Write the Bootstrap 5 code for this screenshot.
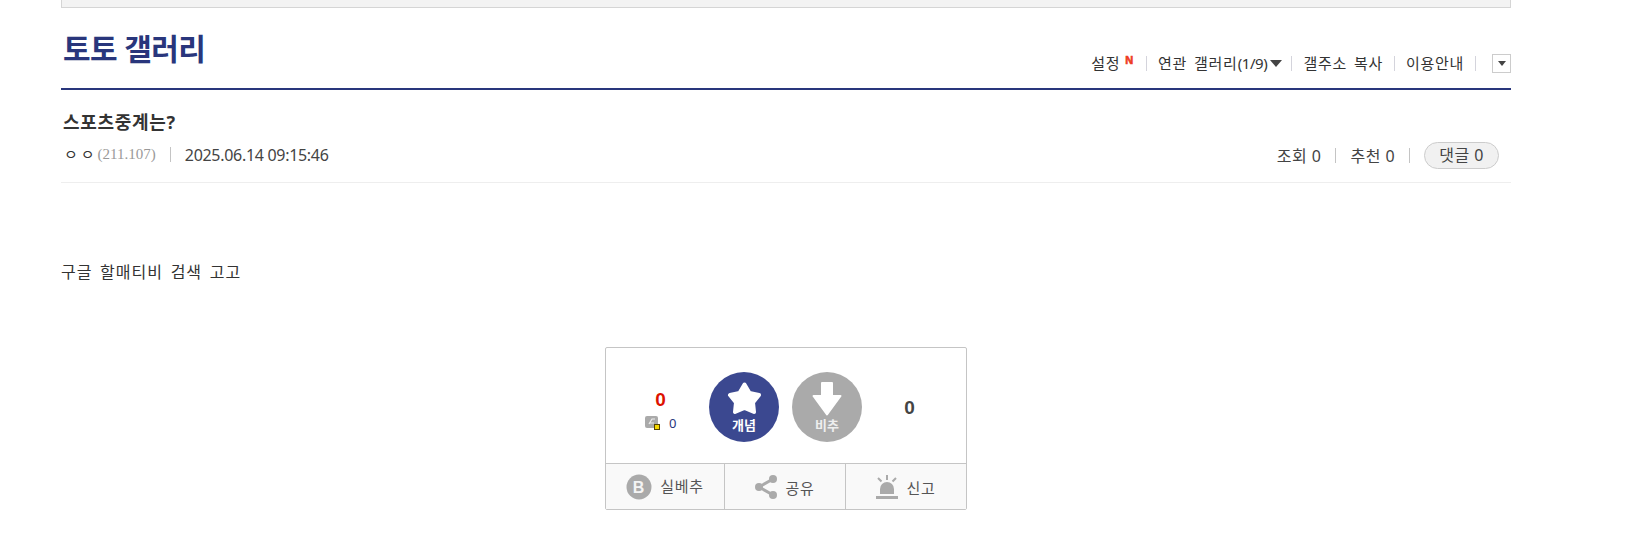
<!DOCTYPE html>
<html lang="ko">

    <head>
        <meta charset="UTF-8">
        <title>토토 갤러리</title>
        <meta name="viewport" content="width=device-width, initial-scale=1.0">
        <link href="https://cdn.jsdelivr.net/npm/bootstrap@5.3.0/dist/css/bootstrap.min.css" rel="stylesheet">
        <style>
            body {
                font-family: "Noto Sans", "Noto Sans CJK KR", sans-serif;
                color: #333;
                font-size: 15px;
                letter-spacing: .7px;
                word-spacing: 2.5px;
                overflow: hidden;
            }

            .gall-wrap { width: 1450px; margin-left: 61px; }
            .top-box { height: 8px; background: #f3f3f3; border: 1px solid #d5d5d5; border-top: 0; }

            .head-row { height: 82px; border-bottom: 2px solid #29367c; }
            .gall-title { font-size: 30px; font-weight: 700; color: #29367c; letter-spacing: -.6px; word-spacing: 0; line-height: 40px; margin: 0 0 0 2px; padding-top: 21px; }
            .head-links { padding-bottom: 15px; line-height: 20px; }
            .sep { width: 1px; height: 15px; background: #d4d4dc; margin: 0 11px; }
            .sep-left { margin-left: 9px; }
            .sep-last { margin-right: 16px; }
            .sep-meta { margin: 0 14px; background: #c4c4c4; }
            .new-mark { color: #ee3b24; font-family: "Liberation Sans", sans-serif; font-size: 11px; font-weight: 700; -webkit-text-stroke: .6px #ee3b24; line-height: 10px; margin: 0 1px 6px 5px; }
            .page-num { letter-spacing: -.4px; }
            .tri { width: 0; height: 0; border-left: 6px solid transparent; border-right: 6px solid transparent; border-top: 7px solid #444; margin-left: 3px; }
            .fold-btn { width: 19px; height: 19px; border: 1px solid #ccc; }
            .fold-btn span { width: 0; height: 0; border-left: 4px solid transparent; border-right: 4px solid transparent; border-top: 5px solid #444; }

            .post-head { height: 93px; border-bottom: 1px solid #eee; padding: 20px 0 0 2px; }
            .post-title { font-size: 18px; font-weight: 700; line-height: 24px; margin: 0; letter-spacing: .7px; }
            .post-meta { margin-top: 8px; }
            .meta-left { margin-bottom: 2px; }
            .writer { letter-spacing: 3px; margin-left: 1px; }
            .writer-ip { font-family: "Liberation Serif", serif; color: #999; letter-spacing: 0; word-spacing: 0; }
            .post-date { font-size: 16px; color: #444; letter-spacing: -.3px; word-spacing: 0; }
            .meta-right { font-size: 16px; color: #444; letter-spacing: .5px; word-spacing: 0; }
            .reply-pill { height: 27px; padding: 0 14px; border: 1px solid #ccc; border-radius: 14px; background: #f1f1f1; line-height: 24px; margin-right: 12px; }

            .post-body { padding-top: 78px; height: 164px; line-height: 22px; font-size: 16px; letter-spacing: 1px; }

            .rec-box { width: 362px; height: 163px; border: 1px solid #c5c5c5; border-radius: 2px; margin-left: 544px; }
            .rec-top { height: 116px; border-bottom: 1px solid #c5c5c5; padding-top: 3px; }
            .up-num { width: 110px; margin-right: -7px; padding-top: 6px; }
            .num-red, .num-gray { font-family: "Liberation Sans", sans-serif; font-size: 19px; font-weight: 700; }
            .num-red { color: #dd1100; line-height: 22px; }
            .num-gray { color: #444; width: 96px; margin-top: 3px; }
            .fix-row { margin-top: 4px; }
            .fix-num { color: #29367c; font-size: 13px; line-height: 16px; }
            .rec-circle { width: 70px; height: 70px; border-radius: 50%; color: #fff; font-size: 13px; font-weight: 700; line-height: 14px; letter-spacing: 0; gap: 2px; }
            .rec-up { background: #3b4890; }
            .rec-down { background: #aaa; margin-left: 13px; color: #eee; }

            .rec-foot { height: 45px; background: #f9f9f9; color: #555; }
            .foot-cell { height: 100%; gap: 8px; }
            .foot-cell + .foot-cell { border-left: 1px solid #c5c5c5; }
            .foot-best { width: 118px; }
            .foot-share { width: 121px; }
            .foot-low { padding-top: 3px; }
        </style>
    </head>

    <body class="bg-white">

        <div class="gall-wrap">
            <div class="top-box"></div>

            <div class="head-row d-flex justify-content-between align-items-end">
                <h2 class="gall-title align-self-start">토토 갤러리</h2>
                <div class="head-links d-flex align-items-center">
                    <span>설정</span><span class="new-mark">N</span>
                    <span class="sep"></span>
                    <span>연관 갤러리<span class="page-num">(1/9)</span></span><span class="tri"></span>
                    <span class="sep sep-left"></span>
                    <span>갤주소 복사</span>
                    <span class="sep"></span>
                    <span>이용안내</span>
                    <span class="sep sep-last"></span>
                    <span class="fold-btn d-flex align-items-center justify-content-center"><span></span></span>
                </div>
            </div>

            <div class="post-head">
                <h3 class="post-title">스포츠중계는?</h3>
                <div class="post-meta d-flex justify-content-between align-items-center">
                    <div class="meta-left d-flex align-items-center">
                        <span class="writer">ㅇㅇ</span><span class="writer-ip">(211.107)</span>
                        <span class="sep sep-meta"></span>
                        <span class="post-date">2025.06.14 09:15:46</span>
                    </div>
                    <div class="meta-right d-flex align-items-center">
                        <span>조회 0</span>
                        <span class="sep sep-meta"></span>
                        <span>추천 0</span>
                        <span class="sep sep-meta"></span>
                        <span class="reply-pill">댓글 0</span>
                    </div>
                </div>
            </div>

            <div class="post-body">구글 할매티비 검색 고고</div>

            <div class="rec-box">
                <div class="rec-top d-flex align-items-center">
                    <div class="up-num text-center">
                        <div class="num-red">0</div>
                        <div class="fix-row d-flex align-items-center justify-content-center gap-2">
                            <svg width="16" height="16" viewBox="0 0 16 16"><rect x="0" y="1" width="13" height="12" rx="2" fill="#aaa"/><path d="M4 9l3-5h3M5 8h4" stroke="#eee" stroke-width="1.2" fill="none"/><rect x="9.5" y="9.5" width="5" height="5" fill="#f5d800" stroke="#554400"/></svg>
                            <span class="fix-num">0</span>
                        </div>
                    </div>
                    <div class="rec-circle rec-up d-flex flex-column align-items-center justify-content-center">
                        <svg width="36" height="34" viewBox="0 0 36 34"><path d="M18.500 2.500L23.500 11 33 13 27 20.500 28 30 18.500 26 9 30 10 20.500 4 13 13.500 11z" fill="#fff" stroke="#fff" stroke-width="4" stroke-linejoin="round"/></svg>
                        <span>개념</span>
                    </div>
                    <div class="rec-circle rec-down d-flex flex-column align-items-center justify-content-center">
                        <svg width="30" height="34" viewBox="0 0 30 34"><path d="M10 1h10v13h8.500L15 32.500 1.500 14H10z" fill="#fff" stroke="#fff" stroke-width="2" stroke-linejoin="round"/></svg>
                        <span>비추</span>
                    </div>
                    <div class="num-gray text-center">0</div>
                </div>
                <div class="rec-foot d-flex">
                    <div class="foot-cell foot-best d-flex align-items-center justify-content-center">
                        <svg width="26" height="26" viewBox="0 0 26 26"><circle cx="13" cy="13" r="12.500" fill="#aaa"/><text x="13" y="18.500" text-anchor="middle" font-family="Liberation Sans" font-size="16" font-weight="700" fill="#f4f4f4">B</text></svg>
                        <span>실베추</span>
                    </div>
                    <div class="foot-cell foot-share d-flex align-items-center justify-content-center">
                        <svg width="22" height="26" viewBox="0 0 22 26"><path d="M18 5L4 13l14 8" stroke="#aaa" stroke-width="3" fill="none"/><circle cx="18" cy="5" r="4" fill="#aaa"/><circle cx="4" cy="13" r="4" fill="#aaa"/><circle cx="18" cy="21" r="4" fill="#aaa"/></svg>
                        <span class="foot-low">공유</span>
                    </div>
                    <div class="foot-cell d-flex align-items-center justify-content-center flex-grow-1">
                        <svg width="22" height="26" viewBox="0 0 22 26"><path d="M4 20v-5a7 7 0 0 1 14 0v5z" fill="#aaa"/><rect x="0" y="22" width="22" height="3" fill="#aaa"/><path d="M11 1v5M2 4l3.500 3.500M20 4l-3.500 3.500" stroke="#aaa" stroke-width="2"/></svg>
                        <span class="foot-low">신고</span>
                    </div>
                </div>
            </div>
        </div>

        <script src="https://cdn.jsdelivr.net/npm/bootstrap@5.3.0/dist/js/bootstrap.bundle.min.js"></script>
    </body>

</html>
